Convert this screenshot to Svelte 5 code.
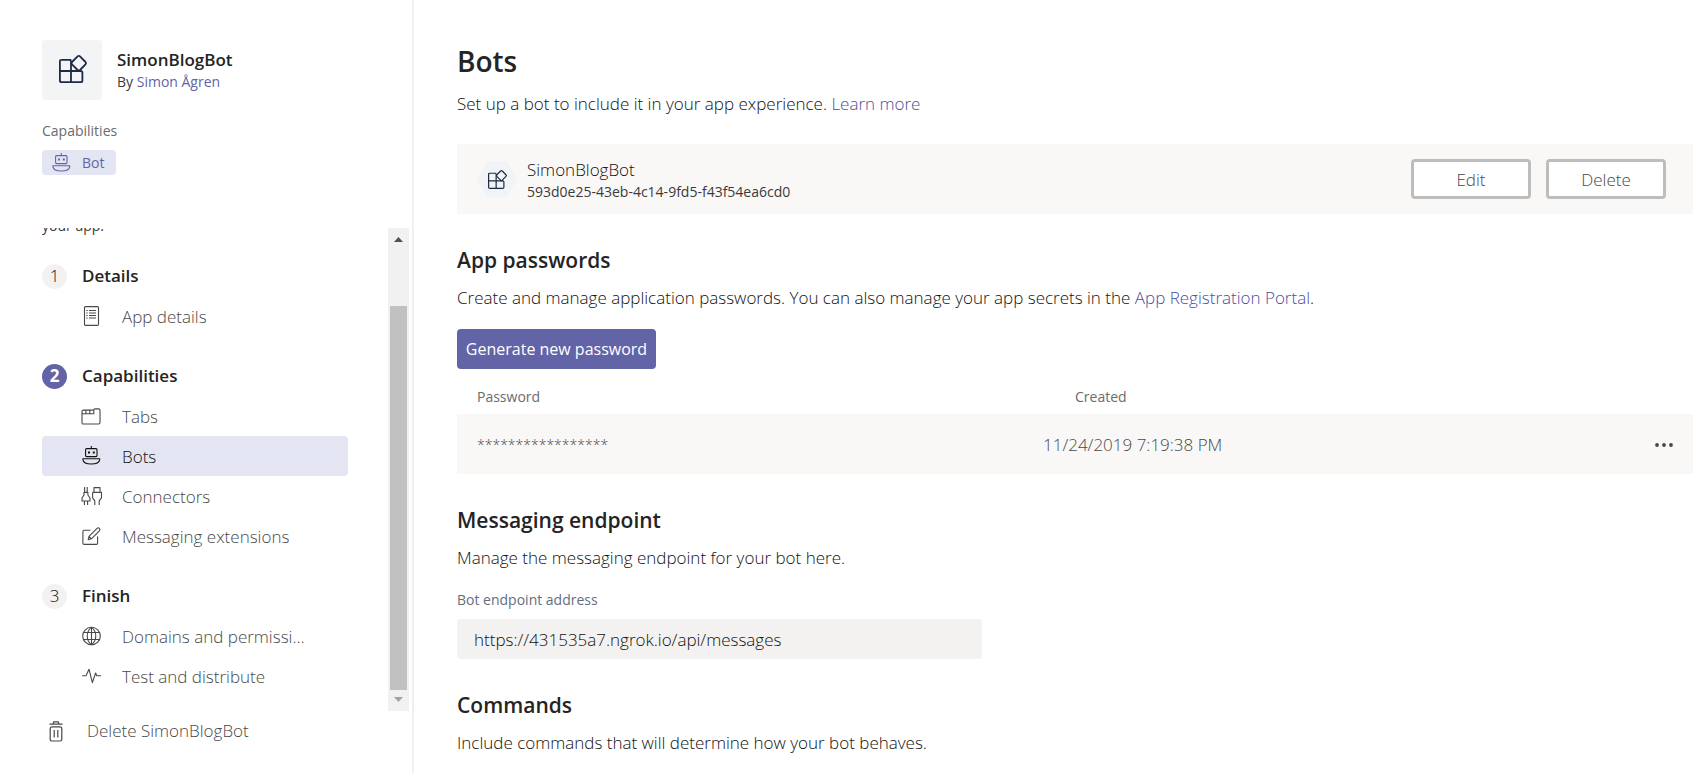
<script>
  const groups = [
    { step: 1, title: 'Details', items: [{ label: 'App details', icon: 'details' }] },
    {
      step: 2,
      title: 'Capabilities',
      current: true,
      items: [
        { label: 'Tabs', icon: 'tabs' },
        { label: 'Bots', icon: 'bot', selected: true },
        { label: 'Connectors', icon: 'connectors' },
        { label: 'Messaging extensions', icon: 'compose' }
      ]
    },
    {
      step: 3,
      title: 'Finish',
      items: [
        { label: 'Domains and permissions', icon: 'globe' },
        { label: 'Test and distribute', icon: 'pulse' }
      ]
    }
  ];
  const passwords = [{ mask: '*****************', created: '11/24/2019 7:19:38 PM' }];
  let endpoint = $state('https://431535a7.ngrok.io/api/messages');
</script>

{#snippet logo(size)}
  <svg width={size} height={size} viewBox="0 0 28 28" fill="none" stroke="#1f2a44" stroke-width="1.8" stroke-linejoin="round" aria-hidden="true">
    <path d="M12 4.8H2.6Q.9 4.8 .9 6.5V25.4Q.9 27.1 2.6 27.1H21.6Q23.4 27.1 23.4 25.4V17.7Q23.4 16 21.6 16H.9M12 27V6.2Q12 4.8 10.8 4.8" />
    <path d="M18.6 1.4Q19.8.3 21 1.4L26.5 7Q27.6 8.2 26.5 9.4L21 15Q19.8 16 18.6 15L13 9.4Q12 8.2 13 7Z" />
  </svg>
{/snippet}

{#snippet icon(name)}
  <svg width="20" height="20" viewBox="0 0 20 20" fill="none" stroke="currentColor" stroke-width="1.1" stroke-linejoin="round" aria-hidden="true">
    {#if name === 'details'}
      <rect x="2.5" y=".6" width="14" height="18.8" rx="1.2" />
      <path d="M7 4.5h7M7 7h7M7 9.5h7M7 12h7M4.3 4.5h1.4M4.3 7h1.4M4.3 9.5h1.4M4.3 12h1.4" />
    {:else if name === 'tabs'}
      <path d="M0 5.5Q0 4.1 1.4 4.1H11.2L12.6 2.9H16.6Q18 2.9 18 4.3V16.6Q18 18 16.6 18H1.4Q0 18 0 16.6Z" />
      <path d="M0 7.8H11.8V4.1M3.9 4.1V7.8M7.8 4.1V7.8" />
    {:else if name === 'bot'}
      <rect x="3.6" y="2.6" width="11.4" height="8" rx="1" />
      <path d="M9.3 0V2.6M.9 12.8H17.7V13.6C17.3 16.4 14.1 18 9.3 18S1.3 16.4 .9 13.6Z" />
      <path d="M6 6.4h2M10.8 6.4h2" stroke-width="2" />
    {:else if name === 'connectors'}
      <path d="M2.6 1V6.4M5.2 1V6.4M2 6.4H5.9V9L8 12V15H0V12L2 9ZM2.4 15V19M5.6 15V19" />
      <path d="M12 1.6H18V6.4H12ZM10.6 6.4H19.5V11.8L17.2 14.8V19M10.6 6.4V11.8L12.8 14.8V19" />
    {:else if name === 'compose'}
      <path d="M8.4 4.2H2.1Q.9 4.2 .9 5.4V17.2Q.9 18.4 2.1 18.4H14.4Q15.6 18.4 15.6 17.2V10.6" />
      <path d="M6.2 13.6L7 10.4L15 2.4Q16.2 1.2 17.4 2.4T17.4 4.8L9.4 12.8ZM7 10.4L9.4 12.8" />
    {:else if name === 'globe'}
      <circle cx="9.5" cy="10" r="8.8" />
      <path d="M9.5 1.2C3.8 6 3.8 14 9.5 18.8C15.2 14 15.2 6 9.5 1.2M1.8 6.5H17.2M1.8 13.5H17.2M9.5 1.2V18.8" />
    {:else if name === 'pulse'}
      <path d="M.2 9.8H4L7 3.2L10.4 16.6L13.6 7L14.8 9.8H19" />
    {/if}
  </svg>
{/snippet}

<div class="app">
  <aside>
    <header>
      <span class="tile">{@render logo(28)}</span>
      <div>
        <strong>SimonBlogBot</strong>
        <p>By <a href="#author">Simon Ågren</a></p>
      </div>
    </header>
    <div class="caps">
      <p>Capabilities</p>
      <span class="badge">{@render icon('bot')}Bot</span>
    </div>

    <div class="scroller">
      <nav aria-label="App editor">
        <p class="intro">your app.</p>
        {#each groups as group}
          <section>
            <h2><span class="step" class:current={group.current}>{group.step}</span>{group.title}</h2>
            <ul>
              {#each group.items as item}
                <li>
                  <a href="#{item.icon}" class:selected={item.selected}>
                    {@render icon(item.icon)}
                    <span>{item.label}</span>
                  </a>
                </li>
              {/each}
            </ul>
          </section>
        {/each}
      </nav>
      <div class="track" aria-hidden="true">
        <svg width="21" height="21" viewBox="0 0 21 21"><path d="M6 14h9l-4.5-5z" fill="#505050" /></svg>
        <div class="thumb"></div>
        <svg width="21" height="21" viewBox="0 0 21 21"><path d="M6 7h9l-4.5 5z" fill="#a3a3a3" /></svg>
      </div>
    </div>

    <button class="remove">
      <svg width="14" height="21" viewBox="0 0 14 21" fill="none" stroke="currentColor" stroke-width="1.2" aria-hidden="true">
        <path d="M.4 3.2H13.6M4.4 3V1.6Q4.4.8 5.2.8H8.8Q9.6.8 9.6 1.6V3M5.2 9V16.6M8.8 9V16.6" />
        <rect x="1.2" y="5.8" width="11.6" height="14.2" rx="1.8" />
      </svg>
      Delete SimonBlogBot
    </button>
  </aside>

  <main>
    <h1>Bots</h1>
    <p>Set up a bot to include it in your app experience. <a href="#learn">Learn more</a></p>

    <div class="card">
      <span class="hex">{@render logo(19)}</span>
      <div class="who">
        <span>SimonBlogBot</span>
        <small>593d0e25-43eb-4c14-9fd5-f43f54ea6cd0</small>
      </div>
      <button class="outline">Edit</button>
      <button class="outline">Delete</button>
    </div>

    <h2>App passwords</h2>
    <p>Create and manage application passwords. You can also manage your app secrets in the <a href="#portal">App Registration Portal</a>.</p>
    <button class="primary">Generate new password</button>
    <table>
      <thead>
        <tr><th>Password</th><th class="created">Created</th><th class="more" aria-label="Actions"></th></tr>
      </thead>
      <tbody>
        {#each passwords as row}
          <tr>
            <td class="mask">{row.mask}</td>
            <td>{row.created}</td>
            <td class="more">
              <button aria-label="More options">
                <svg width="18" height="6" viewBox="0 0 18 6" fill="#484644"><circle cx="2" cy="3" r="1.9" /><circle cx="9" cy="3" r="1.9" /><circle cx="16" cy="3" r="1.9" /></svg>
              </button>
            </td>
          </tr>
        {/each}
      </tbody>
    </table>

    <h2>Messaging endpoint</h2>
    <p>Manage the messaging endpoint for your bot here.</p>
    <label for="endpoint">Bot endpoint address</label>
    <input id="endpoint" type="text" bind:value={endpoint} />

    <h2>Commands</h2>
    <p>Include commands that will determine how your bot behaves.</p>
  </main>
</div>

<style>
  :global(body) {
    margin: 0;
    background: #fff;
  }
  .app {
    display: flex;
    height: 100vh;
    overflow: hidden;
    font: 300 17px/24px 'Segoe UI', 'Open Sans', sans-serif;
    color: #111;
  }
  .app * {
    box-sizing: border-box;
  }
  h1, h2, p, ul {
    margin: 0;
    padding: 0;
  }
  h1, h2, strong {
    color: #252424;
    font-weight: 600;
  }
  ul {
    list-style: none;
  }
  a {
    color: #4b4d9c;
    text-decoration: none;
  }
  button, input {
    font: inherit;
  }
  button {
    cursor: pointer;
  }
  svg {
    display: block;
    flex: none;
    overflow: visible;
  }

  aside {
    flex: none;
    width: 414px;
    display: flex;
    flex-direction: column;
    border-right: 2px solid #f0f0f0;
  }
  header {
    display: flex;
    align-items: center;
    gap: 15px;
    padding: 40px 42px 0;
  }
  header strong {
    display: block;
  }
  header p, .caps, .intro, small, th, label {
    font-size: 14px;
    line-height: 20px;
    font-weight: 400;
    color: #3b3a39;
  }
  header a {
    color: #6264a7;
  }
  .tile {
    display: grid;
    place-items: center;
    width: 60px;
    height: 60px;
    padding: 0 0 2px 2px;
    border-radius: 4px;
    background: #f3f4f6;
  }
  .caps {
    padding: 21px 42px 0;
    height: 128px;
    color: #6b6b6b;
  }
  .badge {
    display: inline-flex;
    align-items: center;
    gap: 10px;
    height: 25px;
    margin-top: 9px;
    padding: 0 12px 0 10px;
    border-radius: 4px;
    background: #e4e5f3;
    color: #6264a7;
  }

  .scroller {
    flex: 1;
    min-height: 0;
    display: flex;
    padding: 0 3px 0 42px;
  }
  nav {
    flex: 1;
    min-width: 0;
    display: flex;
    flex-direction: column;
    justify-content: flex-end;
    gap: 20px;
    padding: 0 40px 15px 0;
    overflow: hidden;
  }
  nav h2 {
    display: flex;
    align-items: center;
    gap: 15px;
    height: 40px;
    font-size: 17px;
    line-height: 24px;
  }
  .step {
    width: 25px;
    height: 25px;
    border-radius: 50%;
    background: #f3f2f1;
    color: #111;
    font-weight: 300;
    text-align: center;
  }
  .step.current {
    background: #6264a7;
    color: #fff;
    font-weight: 700;
  }
  nav a {
    display: flex;
    align-items: center;
    gap: 20px;
    height: 40px;
    padding: 0 36px 0 40px;
    border-radius: 4px;
    color: #484848;
  }
  nav a.selected {
    background: #e4e5f3;
    color: #111;
  }
  nav a span {
    padding-top: 2px;
    overflow: hidden;
    white-space: nowrap;
    text-overflow: ellipsis;
  }
  .track {
    flex: none;
    width: 21px;
    display: flex;
    flex-direction: column;
    background: #f1f1f1;
  }
  .thumb {
    flex: 1;
    margin: 57px 2px 0;
    background: #c1c1c1;
  }
  .remove {
    display: flex;
    align-items: center;
    gap: 24px;
    height: 40px;
    margin: 0 0 22px;
    padding: 0 49px;
    border: 0;
    background: none;
    color: #484848;
  }

  main {
    flex: 1;
    min-width: 0;
    padding: 41px 0 0 43px;
  }
  main h1 {
    margin-bottom: 11px;
    font-size: 28px;
    line-height: 40px;
  }
  main h2 {
    margin: 30px 0 10px;
    font-size: 21px;
    line-height: 32px;
  }
  .card {
    display: flex;
    align-items: center;
    gap: 15px;
    height: 70px;
    margin-top: 28px;
    padding: 0 27px 0 20px;
    background: #f9f8f7;
  }
  .hex {
    display: grid;
    place-items: center;
    width: 40px;
    height: 36px;
    margin-right: -5px;
    background: #f1f4f7;
    clip-path: polygon(25% 0, 75% 0, 100% 50%, 75% 100%, 25% 100%, 0 50%);
  }
  .who {
    flex: 1;
    display: flex;
    flex-direction: column;
    padding-top: 2px;
  }
  .outline {
    width: 120px;
    height: 40px;
    padding: 2px 0 0;
    border: 3px solid #bdbdbd;
    border-radius: 4px;
    background: #fff;
    color: #484848;
  }
  .primary {
    display: block;
    min-width: 199px;
    height: 40px;
    margin-top: 19px;
    padding: 0 7px;
    border: 0;
    border-radius: 4px;
    background: #6264a7;
    color: #fff;
    font-size: 16px;
    font-weight: 400;
  }
  table {
    width: 100%;
    border-collapse: collapse;
    table-layout: fixed;
    color: #484848;
  }
  th {
    padding: 18px 0 7px;
    text-align: left;
    color: #6b6b6b;
  }
  td {
    height: 60px;
    padding: 2px 0 0;
  }
  th:first-child, td:first-child {
    width: 586px;
    padding-left: 20px;
  }
  .mask {
    font-size: 14px;
  }
  .created {
    padding-left: 32px;
  }
  tbody tr {
    background: #f9f8f7;
  }
  .more {
    width: 60px;
    padding-right: 20px;
  }
  .more button {
    display: block;
    margin-left: auto;
    padding: 0;
    border: 0;
    background: none;
  }
  label {
    display: block;
    margin: 20px 0 9px;
    color: #666d80;
  }
  input {
    display: block;
    width: 525px;
    max-width: 100%;
    height: 40px;
    padding: 0 17px;
    border: 0;
    border-radius: 4px;
    background: #f3f2f1;
    color: #111;
  }
</style>
